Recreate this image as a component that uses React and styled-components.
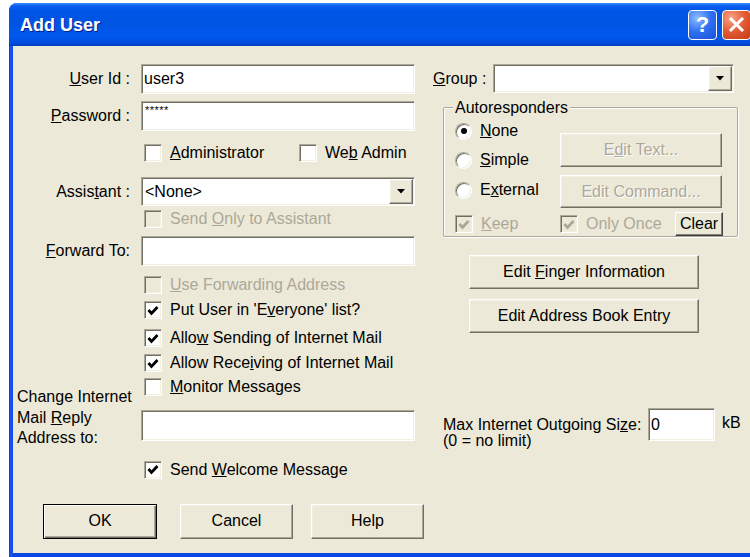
import styled, { createGlobalStyle, css } from 'styled-components';

const GlobalStyle = createGlobalStyle`
  html, body {
    margin: 0;
    padding: 0;
    background: #fff;
    overflow: hidden;
  }
  body {
    font-family: "Liberation Sans", Arial, sans-serif;
    font-size: 16px;
    line-height: 18px;
    color: #000;
  }
`;

const sunken = css`
  border: 1px solid;
  border-color: #aca899 #fff #fff #aca899;
  box-shadow: inset 1px 1px 0 #716f64, inset -1px -1px 0 #f1efe2;
`;

const raised = css`
  border: 1px solid;
  border-color: #fff #716f64 #716f64 #fff;
  box-shadow: inset -1px -1px 0 #aca899, inset 1px 1px 0 #f1efe2;
`;

/* the desktop: the dialog runs past its right edge */
const Screen = styled.div`
  width: 100vw;
  height: 100vh;
  overflow: hidden;
`;

const Window = styled.div`
  margin: 3px 0 0 9px;
  width: 760px;
  height: 554px;
  display: flex;
  flex-direction: column;
  background: linear-gradient(to right, #0831d9, #1f5cf0 2px, #0a46e0 4px);
  border-radius: 8px 8px 0 0;
  overflow: hidden;
`;

const TitleBar = styled.div`
  height: 43px;
  flex: none;
  display: flex;
  align-items: center;
  justify-content: space-between;
  padding: 0 18px 0 11px;
  background: linear-gradient(
    to bottom,
    #3a8cff 0,
    #0a5cf0 3px,
    #0055e5 8px,
    #0054e3 20px,
    #0058ee 34px,
    #004ad9 40px,
    #003cc2 43px
  );
`;

const Title = styled.h1`
  margin: 0;
  font: bold 18px/20px "Liberation Sans", Arial, sans-serif;
  color: #fff;
  text-shadow: 1px 1px 0 #0a1e8a;
`;

const CaptionButtons = styled.div`
  display: flex;
  gap: 5px;
`;

const CaptionButton = styled.div`
  width: 29px;
  height: 30px;
  box-sizing: border-box;
  border: 1px solid #fff;
  border-radius: 4px;
  display: flex;
  align-items: center;
  justify-content: center;
  color: #fff;
  font: bold 22px/1 "Liberation Sans", Arial, sans-serif;
  background: ${p => p.$close
    ? 'radial-gradient(circle at 30% 25%, #f4a484, #e25a34 50%, #c23a17)'
    : 'radial-gradient(circle at 30% 25%, #8cbcff, #2e6ff2 50%, #1a4fd6)'};
`;

const Client = styled.div`
  flex: 1;
  margin: 0 4px 4px;
  background: #ece9d8;
  display: flex;
  align-items: flex-start;
  padding-top: 18px;
`;

const LeftPane = styled.div`
  width: 402px;
  flex: none;
  display: flex;
  flex-direction: column;
`;

const RightPane = styled.div`
  margin-left: 18px;
  display: flex;
  flex-direction: column;
  align-items: flex-start;
`;

const Row = styled.div`
  display: flex;
  align-items: ${p => p.$align || 'center'};
  gap: ${p => p.$gap ?? 11}px;
  margin-top: ${p => p.$top || 0}px;
  margin-left: ${p => p.$left || 0}px;
`;

const CheckRow = styled.div`
  display: flex;
  align-items: center;
  min-height: 20px;
  margin-top: ${p => p.$top || 0}px;
  padding-left: ${p => p.$indent ?? 131}px;
`;

const Label = styled.label`
  width: ${p => p.$w || 117}px;
  flex: none;
  text-align: ${p => p.$align || 'right'};
  white-space: nowrap;
`;

const AddressLabel = styled.label`
  width: 124px;
  flex: none;
  padding-left: 4px;
  line-height: 20.5px;
`;

const TextBox = styled.input`
  box-sizing: border-box;
  width: ${p => p.$w || 274}px;
  height: ${p => p.$h || 30}px;
  margin: ${p => p.$top || 0}px 0 0;
  padding: 0 2px;
  ${sunken};
  background: #fff;
  font: 16px "Liberation Sans", Arial, sans-serif;
  color: #000;
  outline: none;
`;

/* masked entry: the stars sit small near the top of the box */
const PasswordBox = styled(TextBox)`
  padding: 0 3px 13px;
  font-size: 11px;
  letter-spacing: 0.5px;
`;

const Combo = styled.div`
  box-sizing: border-box;
  width: ${p => p.$w}px;
  height: 29px;
  display: flex;
  align-items: center;
  justify-content: space-between;
  padding: 1px 1px 1px 3px;
  ${sunken};
  background: #fff;
`;

const DropButton = styled.span`
  box-sizing: border-box;
  width: 24px;
  height: 25px;
  display: flex;
  align-items: center;
  justify-content: center;
  background: #ece9d8;
  ${raised};
`;

const Button = styled.button`
  box-sizing: border-box;
  width: ${p => p.$w}px;
  height: ${p => p.$h || 34}px;
  margin: ${p => p.$top || 0}px 0 0 ${p => p.$left || 0}px;
  padding: 0;
  flex: none;
  background: #ece9d8;
  ${raised};
  font: 16px "Liberation Sans", Arial, sans-serif;
  color: #000;

  &:disabled {
    color: #aca899;
    text-shadow: 1px 1px 0 #fff;
  }

  ${p => p.$default && css`
    border: 1px solid #000;
    box-shadow: inset 1px 1px 0 #fff, inset -1px -1px 0 #716f64, inset -2px -2px 0 #aca899;
  `}
`;

const ButtonRow = styled.div`
  display: flex;
  margin-top: 24px;
  padding-left: 30px;
`;

const CheckItem = styled.span`
  display: flex;
  align-items: center;
  gap: 8px;
  width: ${p => (p.$w ? `${p.$w}px` : 'auto')};
  flex: none;
  white-space: nowrap;
  color: ${p => (p.$disabled ? '#aca899' : '#000')};
`;

const Box = styled.span`
  box-sizing: border-box;
  width: 18px;
  height: 18px;
  flex: none;
  display: flex;
  align-items: center;
  justify-content: center;
  ${sunken};
  background: ${p => (p.$disabled ? '#ece9d8' : '#fff')};
`;

const RadioDot = styled.span`
  box-sizing: border-box;
  width: 17px;
  height: 17px;
  flex: none;
  border-radius: 50%;
  display: flex;
  align-items: center;
  justify-content: center;
  ${sunken};
  background: #fff;

  &::after {
    content: '';
    width: 6px;
    height: 6px;
    border-radius: 50%;
    background: #000;
    display: ${p => (p.$on ? 'block' : 'none')};
  }
`;

const GroupBox = styled.div`
  position: relative;
  box-sizing: border-box;
  width: 295px;
  height: 130px;
  margin: 14px 0 0 10px;
  padding-left: 11px;
  border: 1px solid #aca899;
  border-radius: 2px;
  box-shadow: inset 1px 1px 0 #fff, 1px 1px 0 #fff;
`;

const Legend = styled.span`
  position: absolute;
  top: -9px;
  left: 9px;
  padding: 0 2px;
  background: #ece9d8;
  line-height: 18px;
`;

const GroupTop = styled.div`
  display: flex;
  align-items: flex-start;
`;

const RadioColumn = styled.div`
  width: 105px;
  flex: none;
  display: flex;
  flex-direction: column;
  padding-top: 13px;
`;

const RadioItem = styled.span`
  display: flex;
  align-items: center;
  gap: 8px;
  min-height: 20px;
  margin-top: ${p => p.$top || 0}px;
`;

const ButtonColumn = styled.div`
  display: flex;
  flex-direction: column;
  padding-top: 25px;
`;

const GroupBottom = styled.div`
  display: flex;
  align-items: center;
  height: 24px;
  margin-top: 4px;
`;

const SmallButton = styled.button`
  box-sizing: border-box;
  width: 48px;
  height: 24px;
  padding: 0;
  background: #ece9d8;
  border: 1px solid;
  border-color: #fff #404040 #404040 #fff;
  box-shadow: inset -1px -1px 0 #808080;
  font: 16px "Liberation Sans", Arial, sans-serif;
  color: #000;
`;

const MaxRow = styled.div`
  display: flex;
  align-items: flex-start;
  margin: 75px 0 0 10px;
`;

const MaxLabel = styled.label`
  width: 205px;
  flex: none;
  margin-top: 9px;
  line-height: 16px;
`;

const Unit = styled.span`
  margin: 6px 0 0 7px;
`;

const CheckMark = ({ color }) => (
  <svg width="12" height="11" viewBox="0 0 12 11">
    <path d="M1.5 5 L4.5 8.5 L10.5 2" fill="none" stroke={color} strokeWidth="2.8" />
  </svg>
);

const Check = ({ checked, disabled, width, children }) => (
  <CheckItem $w={width} $disabled={disabled}>
    <Box $disabled={disabled}>
      {checked && <CheckMark color={disabled ? '#aca899' : '#000'} />}
    </Box>
    <span>{children}</span>
  </CheckItem>
);

const Radio = ({ on, top, children }) => (
  <RadioItem $top={top}>
    <RadioDot $on={on} />
    <span>{children}</span>
  </RadioItem>
);

const Dropdown = ({ width, children }) => (
  <Combo $w={width}>
    <span>{children}</span>
    <DropButton>
      <svg width="8" height="5" viewBox="0 0 8 5">
        <polygon points="0,0 8,0 4,4.5" fill="#000" />
      </svg>
    </DropButton>
  </Combo>
);

export default function App() {
  return (
    <Screen>
      <GlobalStyle />
      <Window>
        <TitleBar>
          <Title>Add User</Title>
          <CaptionButtons>
            <CaptionButton>?</CaptionButton>
            <CaptionButton $close>
              <svg width="17" height="17" viewBox="0 0 17 17">
                <path d="M3 3 L14 14 M14 3 L3 14" stroke="#fff" strokeWidth="3" strokeLinecap="square" />
              </svg>
            </CaptionButton>
          </CaptionButtons>
        </TitleBar>

        <Client>
          <LeftPane>
            <Row>
              <Label><u>U</u>ser Id :</Label>
              <TextBox defaultValue="user3" />
            </Row>
            <Row $top={7}>
              <Label><u>P</u>assword :</Label>
              <PasswordBox defaultValue="*****" />
            </Row>
            <CheckRow $top={12}>
              <Check width={155}><u>A</u>dministrator</Check>
              <Check>We<u>b</u> Admin</Check>
            </CheckRow>
            <Row $top={14}>
              <Label>Assis<u>t</u>ant :</Label>
              <Dropdown width={274}>&lt;None&gt;</Dropdown>
            </Row>
            <CheckRow $top={3}>
              <Check disabled>Send <u>O</u>nly to Assistant</Check>
            </CheckRow>
            <Row $top={7}>
              <Label><u>F</u>orward To:</Label>
              <TextBox />
            </Row>
            <CheckRow $top={9}>
              <Check disabled><u>U</u>se Forwarding Address</Check>
            </CheckRow>
            <CheckRow $top={5}>
              <Check checked>Put User in 'E<u>v</u>eryone' list?</Check>
            </CheckRow>
            <CheckRow $top={8}>
              <Check checked>Allo<u>w</u> Sending of Internet Mail</Check>
            </CheckRow>
            <CheckRow $top={5}>
              <Check checked>Allow Rece<u>i</u>ving of Internet Mail</Check>
            </CheckRow>
            <CheckRow $top={4}>
              <Check><u>M</u>onitor Messages</Check>
            </CheckRow>
            <Row $top={-10} $align="flex-start" $gap={0}>
              <AddressLabel>Change Internet<br />Mail <u>R</u>eply<br />Address to:</AddressLabel>
              <TextBox $top={23} $h={31} />
            </Row>
            <CheckRow $top={11}>
              <Check checked>Send <u>W</u>elcome Message</Check>
            </CheckRow>
            <ButtonRow>
              <Button $default $w={114} $h={35}>OK</Button>
              <Button $w={113} $h={35} $left={23}>Cancel</Button>
              <Button $w={113} $h={35} $left={18}>Help</Button>
            </ButtonRow>
          </LeftPane>

          <RightPane>
            <Row $gap={0}>
              <Label $w={60} $align="left"><u>G</u>roup :</Label>
              <Dropdown width={241} />
            </Row>

            <GroupBox>
              <Legend>Autoresponders</Legend>
              <GroupTop>
                <RadioColumn>
                  <Radio on><u>N</u>one</Radio>
                  <Radio top={9}><u>S</u>imple</Radio>
                  <Radio top={10}>E<u>x</u>ternal</Radio>
                </RadioColumn>
                <ButtonColumn>
                  <Button disabled $w={162} $h={34}>E<u>d</u>it Text...</Button>
                  <Button disabled $w={162} $h={33} $top={8}>Edit Command...</Button>
                </ButtonColumn>
              </GroupTop>
              <GroupBottom>
                <Check checked disabled width={105}><u>K</u>eep</Check>
                <Check checked disabled width={115}>Only Once</Check>
                <SmallButton>Clear</SmallButton>
              </GroupBottom>
            </GroupBox>

            <Button $w={230} $h={34} $top={18} $left={36}>Edit <u>F</u>inger Information</Button>
            <Button $w={230} $h={34} $top={10} $left={36}>Edit Address Book Entry</Button>

            <MaxRow>
              <MaxLabel>Max Internet Outgoing Si<u>z</u>e:<br />(0 = no limit)</MaxLabel>
              <TextBox $w={67} $h={33} defaultValue="0" />
              <Unit>kB</Unit>
            </MaxRow>
          </RightPane>
        </Client>
      </Window>
    </Screen>
  );
}
